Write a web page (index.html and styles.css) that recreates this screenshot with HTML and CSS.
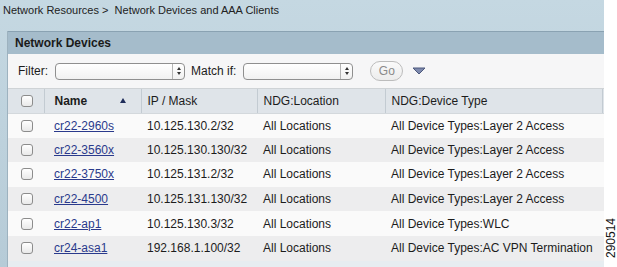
FILE: index.html
```html
<!DOCTYPE html>
<html lang="en">

<head>
     <meta charset="UTF-8">
     <title>Network Devices</title>
     <link rel="stylesheet" href="styles.css">
</head>

<body>
     <div class="page">
          <div class="screen">
               <div class="crumb">Network Resources &gt;&nbsp; Network Devices and AAA Clients</div>
               <div class="panel">
                    <div class="panel-head">Network Devices</div>
                    <div class="filter">
                         <span class="label">Filter:</span>
                         <span class="select wide"><span class="spin"><i class="up"></i><i class="down"></i></span></span>
                         <span class="label match">Match if:</span>
                         <span class="select narrow"><span class="spin"><i class="up"></i><i class="down"></i></span></span>
                         <button class="go">Go</button>
                         <svg class="more" width="14" height="8" viewBox="0 0 14 8">
                              <path d="M1 1 L13 1 L7 7 Z" fill="#7d89ad" stroke="#4c587c" stroke-width="1" />
                         </svg>
                    </div>
                    <table class="grid">
                         <colgroup>
                              <col class="c-check">
                              <col class="c-name">
                              <col class="c-ip">
                              <col class="c-loc">
                              <col class="c-type">
                              <col class="c-end">
                         </colgroup>
                         <thead>
                              <tr>
                                   <th class="cb"><span class="box"></span></th>
                                   <th class="name sorted">Name <span class="sort"></span></th>
                                   <th>IP / Mask</th>
                                   <th>NDG:Location</th>
                                   <th>NDG:Device Type</th>
                                   <th class="end"></th>
                              </tr>
                         </thead>
                         <tbody>
                              <tr>
                                   <td class="cb"><span class="box"></span></td>
                                   <td class="name"><a href="#">cr22-2960s</a></td>
                                   <td>10.125.130.2/32</td>
                                   <td>All Locations</td>
                                   <td>All Device Types:Layer 2 Access</td>
                                   <td></td>
                              </tr>
                              <tr>
                                   <td class="cb"><span class="box"></span></td>
                                   <td class="name"><a href="#">cr22-3560x</a></td>
                                   <td>10.125.130.130/32</td>
                                   <td>All Locations</td>
                                   <td>All Device Types:Layer 2 Access</td>
                                   <td></td>
                              </tr>
                              <tr>
                                   <td class="cb"><span class="box"></span></td>
                                   <td class="name"><a href="#">cr22-3750x</a></td>
                                   <td>10.125.131.2/32</td>
                                   <td>All Locations</td>
                                   <td>All Device Types:Layer 2 Access</td>
                                   <td></td>
                              </tr>
                              <tr>
                                   <td class="cb"><span class="box"></span></td>
                                   <td class="name"><a href="#">cr22-4500</a></td>
                                   <td>10.125.131.130/32</td>
                                   <td>All Locations</td>
                                   <td>All Device Types:Layer 2 Access</td>
                                   <td></td>
                              </tr>
                              <tr>
                                   <td class="cb"><span class="box"></span></td>
                                   <td class="name"><a href="#">cr22-ap1</a></td>
                                   <td>10.125.130.3/32</td>
                                   <td>All Locations</td>
                                   <td>All Device Types:WLC</td>
                                   <td></td>
                              </tr>
                              <tr>
                                   <td class="cb"><span class="box"></span></td>
                                   <td class="name"><a href="#">cr24-asa1</a></td>
                                   <td>192.168.1.100/32</td>
                                   <td>All Locations</td>
                                   <td>All Device Types:AC VPN Termination</td>
                                   <td></td>
                              </tr>
                         </tbody>
                    </table>
               </div>
          </div>
          <div class="tag"><span>290514</span></div>
     </div>
</body>

</html>
```

FILE: styles.css
```css
* {
     margin: 0;
     padding: 0;
     box-sizing: border-box;
}

body {
     background: #fff;
     font-family: "Liberation Sans", Arial, sans-serif;
     font-size: 12px;
     color: #1c1c1c;
}

.page {
     display: flex;
     width: 617px;
     height: 267px;
     overflow: hidden;
}

.screen {
     width: 604px;
     height: 267px;
     background: linear-gradient(#c5d8e2, #b6cbd7);
     overflow: hidden;
}

.crumb {
     height: 31px;
     padding: 4px 0 0 3px;
     font-size: 11px;
     color: #222;
}

.panel {
     margin-left: 7px;
     border-left: 1px solid #9db2bf;
     background: #e7edf1;
     height: 240px;
}

.panel-head {
     height: 23px;
     line-height: 22px;
     padding-left: 7px;
     background: #a5bccb;
     border-top: 1px solid #8aa2b2;
     font-weight: bold;
     color: #1a1a1a;
}

.filter {
     display: flex;
     align-items: center;
     height: 35px;
     padding-left: 10px;
     background: #f6f6f7;
     border-bottom: 1px solid #cfd3d6;
}

.label {
     margin-right: 7px;
}

.label.match {
     margin-left: 6px;
     margin-right: 7px;
}

.select {
     display: flex;
     justify-content: flex-end;
     height: 17px;
     border: 1px solid #8f8f8f;
     border-radius: 4px;
     background: linear-gradient(#ffffff, #f1f1f1);
}

.select.wide {
     width: 130px;
}

.select.narrow {
     width: 110px;
}

.spin {
     display: flex;
     flex-direction: column;
     align-items: center;
     justify-content: center;
     gap: 2px;
     width: 12px;
     border-left: 1px solid #b5b5b5;
}

.spin i {
     display: block;
     width: 0;
     height: 0;
     border-left: 2.5px solid transparent;
     border-right: 2.5px solid transparent;
}

.spin .up {
     border-bottom: 3px solid #333;
}

.spin .down {
     border-top: 3px solid #333;
}

.go {
     margin-left: 17px;
     width: 33px;
     height: 20px;
     border: 1px solid #bcbcbc;
     border-radius: 10px;
     background: linear-gradient(#fafafa, #ececec);
     font-family: inherit;
     font-size: 12px;
     color: #8a8a8a;
}

.more {
     margin-left: 9px;
}

.grid {
     width: 596px;
     border-collapse: collapse;
     table-layout: fixed;
}

.c-check {
     width: 36px;
}

.c-name {
     width: 97px;
}

.c-ip {
     width: 116px;
}

.c-loc {
     width: 128px;
}

.c-type {
     width: 217px;
}

.c-end {
     width: 2px;
}

.grid th,
.grid td {
     height: 24.6px;
     padding: 0 0 0 6px;
     text-align: left;
     font-weight: normal;
     white-space: nowrap;
     overflow: hidden;
}

.grid th {
     height: 24px;
     background: #dfe4e9;
     border-right: 1px solid #c3cbd2;
     border-bottom: 1px solid #d3d8dc;
}

.grid th.end {
     border-right: 0;
}

.grid th.sorted {
     font-weight: bold;
}

.grid .cb {
     padding: 0 0 0 13px;
}

.grid .name {
     padding-left: 10px;
}

.sort {
     display: inline-block;
     margin-left: 29px;
     vertical-align: 2px;
     width: 0;
     height: 0;
     border-left: 3.5px solid transparent;
     border-right: 3.5px solid transparent;
     border-bottom: 5px solid #1f2d5a;
}

.box {
     display: block;
     width: 12px;
     height: 12px;
     border: 1px solid #8c8c8c;
     border-radius: 3px;
     background: linear-gradient(#ffffff, #e9e9e9);
}

.grid tbody tr:nth-child(odd) td {
     background: #fafafa;
}

.grid tbody tr:nth-child(even) td {
     background: #ededee;
}

.grid a {
     color: #2a3a8c;
}

.tag {
     display: flex;
     align-items: flex-end;
     justify-content: center;
     width: 13px;
     padding-bottom: 9px;
}

.tag span {
     writing-mode: vertical-rl;
     transform: rotate(180deg);
     font-size: 12px;
     line-height: 12px;
     color: #111;
}
```
